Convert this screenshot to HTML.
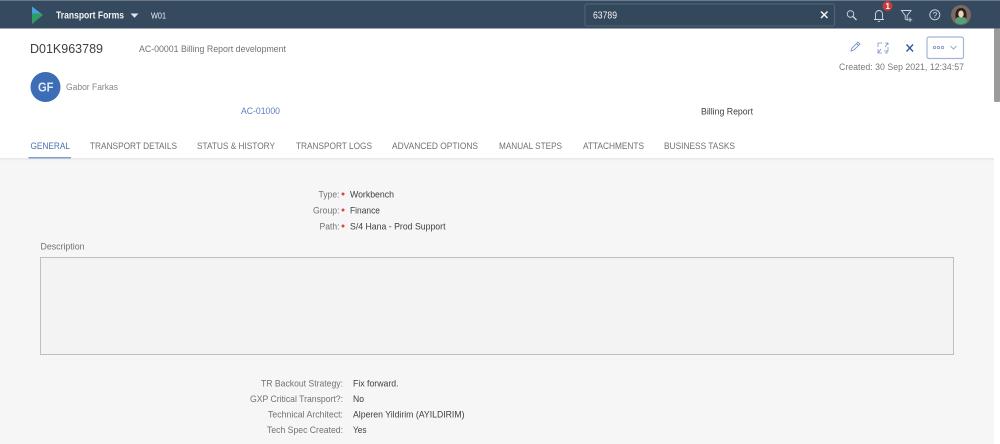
<!DOCTYPE html>
<html lang="en">
<head>
<meta charset="utf-8">
<title>Transport Forms</title>
<style>
html,body{margin:0;padding:0;width:1000px;height:444px;overflow:hidden;background:#fff}
svg{display:block}
text{font-family:"Liberation Sans",sans-serif;font-size:9.5px;fill:#6f7275}
.v{fill:#3c4043}
.tab{font-size:9.5px;fill:#6f7275}
</style>
</head>
<body>
<svg width="1000" height="444" viewBox="0 0 1000 444" xmlns="http://www.w3.org/2000/svg">
<defs>
<linearGradient id="sh" x1="0" y1="0" x2="0" y2="1"><stop offset="0" stop-color="#e6e6e6"/><stop offset="1" stop-color="#f6f6f6"/></linearGradient>
</defs>
<rect width="1000" height="444" fill="#fff"/>
<!-- content -->
<rect x="0" y="158" width="994" height="286" fill="#f6f6f6"/>
<rect x="0" y="158" width="994" height="3" fill="url(#sh)"/>
<!-- shell -->
<rect x="0" y="0" width="1000" height="28.500" fill="#364a5f"/>
<rect x="0" y="0" width="1000" height="1" fill="#6b7a8a"/>
<polygon points="32,6.500 43,15 32,24" fill="#2f9e62"/>
<polygon points="32,6.500 41,13.500 32,13.500" fill="#4a9fe0"/>
<text x="56" y="18.500" textLength="68" lengthAdjust="spacingAndGlyphs" style="font-size:10px;font-weight:bold;fill:#f2f4f6">Transport Forms</text>
<polygon points="130.500,13.500 138.500,13.500 134.500,17.800" fill="#dfe5ea"/>
<text x="151" y="18.500" textLength="15" lengthAdjust="spacingAndGlyphs" style="font-size:8.500px;fill:#eef1f4">W01</text>
<!-- search -->
<rect x="585" y="4" width="249.500" height="22" rx="2" fill="#34485c" stroke="#50657a"/>
<text x="593" y="18.500" textLength="24" lengthAdjust="spacingAndGlyphs" style="font-size:10px;fill:#f2f4f6">63789</text>
<path d="M821 11.500l6.500 6.500M827.500 11.500l-6.500 6.500" stroke="#f2f4f6" stroke-width="1.500" fill="none"/>
<!-- shell icons -->
<g fill="none" stroke="#cfd8e0" stroke-width=".9">
<circle cx="850.500" cy="14" r="3.300"/><path d="M853 16.500l3.500 3.500" stroke-width="1.300"/>
<path d="M875.500 19.500v-5.500a3.500 3.500 0 0 1 7 0v5.500zM874 19.500h10M878 21a1.200 1.200 0 0 0 2 0"/>
<path d="M901.500 10.500h9.500l-3.800 5v4.500l-2-1v-3.500zM910 17.500v4.500M907.800 19.800h4.400"/>
<circle cx="934.800" cy="14.800" r="5"/>
</g>
<text x="932.800" y="17.800" style="font-size:8px;fill:#d9e2ea">?</text>
<circle cx="887.500" cy="6" r="5" fill="#c63b3b"/>
<text x="885.500" y="9" style="font-size:8px;font-weight:bold;fill:#fff">1</text>
<!-- avatar -->
<circle cx="961" cy="15" r="10" fill="#7b6a5f"/>
<path d="M955 22c0-3 2.500-4.500 6-4.500s6 1.500 6 4.500a10 10 0 0 1-12 0z" fill="#4fa37c"/>
<path d="M955.500 18c-.5-7 1.500-10 5.500-10s6 3 5.500 10l-2.500-1h-6z" fill="#26211f"/>
<ellipse cx="961" cy="14" rx="2.700" ry="3.500" fill="#edd2b8"/>
<!-- title -->
<text x="30" y="53" textLength="73" lengthAdjust="spacingAndGlyphs" style="font-size:13px;fill:#3c4043">D01K963789</text>
<text x="139" y="52" textLength="147" lengthAdjust="spacingAndGlyphs" style="font-size:9.500px">AC-00001 Billing Report development</text>
<!-- actions -->
<g fill="none" stroke="#7d93c0" stroke-width=".9">
<path d="M851 51l1-3 6-6 2 2-6 6zM856.500 43.500l2 2"/>
<path d="M878 47v-4h4M888 47v4h-4M878 49v4h4M888 45v-2h-3M885 47l3-4M881 49l-3 4M887 51v2h-2" stroke-width=".8"/>
</g>
<path d="M906.500 44.500l6.500 7M913 44.500l-6.500 7" stroke="#2e5597" stroke-width="1.300" fill="none"/>
<rect x="927" y="37" width="36.500" height="21.500" rx="2" fill="#fff" stroke="#a3b5d6" stroke-width="1.200"/>
<g fill="none" stroke="#8198c4" stroke-width=".8"><circle cx="934.500" cy="47.500" r="1.200"/><circle cx="938.500" cy="47.500" r="1.200"/><circle cx="942.500" cy="47.500" r="1.200"/><path d="M950.500 46l3 3 3-3"/></g>
<text x="839" y="70" textLength="125" lengthAdjust="spacingAndGlyphs" style="font-size:9.500px;fill:#77797c">Created: 30 Sep 2021, 12:34:57</text>
<!-- person -->
<circle cx="45.500" cy="87" r="15" fill="#3c6db5"/>
<text x="38" y="91.500" textLength="15.500" lengthAdjust="spacingAndGlyphs" style="font-size:12.500px;font-weight:bold;fill:#dfe7f3">GF</text>
<text x="66" y="90" textLength="52" lengthAdjust="spacingAndGlyphs" style="font-size:9.500px;fill:#85878a">Gabor Farkas</text>
<text x="241" y="114" textLength="39" lengthAdjust="spacingAndGlyphs" style="font-size:9.500px;fill:#5b7fc7">AC-01000</text>
<text x="701" y="114.500" textLength="52" lengthAdjust="spacingAndGlyphs" class="v" style="font-size:9.500px">Billing Report</text>
<!-- tabs -->
<text x="30.500" y="149" textLength="39.500" lengthAdjust="spacingAndGlyphs" style="font-size:9.500px;fill:#4a6fb5">GENERAL</text>
<text x="90" y="149" textLength="87" lengthAdjust="spacingAndGlyphs" class="tab">TRANSPORT DETAILS</text>
<text x="197" y="149" textLength="78" lengthAdjust="spacingAndGlyphs" class="tab">STATUS &amp; HISTORY</text>
<text x="296" y="149" textLength="76" lengthAdjust="spacingAndGlyphs" class="tab">TRANSPORT LOGS</text>
<text x="392" y="149" textLength="86" lengthAdjust="spacingAndGlyphs" class="tab">ADVANCED OPTIONS</text>
<text x="499" y="149" textLength="63" lengthAdjust="spacingAndGlyphs" class="tab">MANUAL STEPS</text>
<text x="583" y="149" textLength="61" lengthAdjust="spacingAndGlyphs" class="tab">ATTACHMENTS</text>
<text x="664" y="149" textLength="71" lengthAdjust="spacingAndGlyphs" class="tab">BUSINESS TASKS</text>
<rect x="28.500" y="157" width="42.500" height="1.500" fill="#7f9ccf"/>
<!-- fields -->
<text x="318.500" y="197.500" textLength="21" lengthAdjust="spacingAndGlyphs">Type:</text>
<circle cx="343" cy="194" r="1.500" fill="#cf4a4c"/>
<text x="350" y="197.500" textLength="44" lengthAdjust="spacingAndGlyphs" class="v">Workbench</text>
<text x="313" y="213.500" textLength="26.500" lengthAdjust="spacingAndGlyphs">Group:</text>
<circle cx="343" cy="210" r="1.500" fill="#cf4a4c"/>
<text x="350" y="213.500" textLength="30" lengthAdjust="spacingAndGlyphs" class="v">Finance</text>
<text x="319.500" y="229.500" textLength="20" lengthAdjust="spacingAndGlyphs">Path:</text>
<circle cx="343" cy="226" r="1.500" fill="#cf4a4c"/>
<text x="350" y="229.500" textLength="95.500" lengthAdjust="spacingAndGlyphs" class="v">S/4 Hana - Prod Support</text>
<text x="40.500" y="249.500" textLength="44" lengthAdjust="spacingAndGlyphs">Description</text>
<rect x="40.500" y="257.500" width="913" height="97" fill="#f3f3f3" stroke="#bcc0c4"/>
<text x="261" y="386.500" textLength="82" lengthAdjust="spacingAndGlyphs">TR Backout Strategy:</text>
<text x="353" y="386.500" textLength="45.500" lengthAdjust="spacingAndGlyphs" class="v">Fix forward.</text>
<text x="250" y="402" textLength="93" lengthAdjust="spacingAndGlyphs">GXP Critical Transport?:</text>
<text x="353" y="402" textLength="11" lengthAdjust="spacingAndGlyphs" class="v">No</text>
<text x="268" y="417.500" textLength="75" lengthAdjust="spacingAndGlyphs">Technical Architect:</text>
<text x="353" y="417.500" textLength="111.500" lengthAdjust="spacingAndGlyphs" class="v">Alperen Yildirim (AYILDIRIM)</text>
<text x="267" y="433" textLength="76" lengthAdjust="spacingAndGlyphs">Tech Spec Created:</text>
<text x="353" y="433" textLength="13.500" lengthAdjust="spacingAndGlyphs" class="v">Yes</text>
<!-- scrollbar -->
<rect x="994" y="28.500" width="6" height="73.500" rx="1" fill="#9b9b9b"/>
</svg>
</body>
</html>
